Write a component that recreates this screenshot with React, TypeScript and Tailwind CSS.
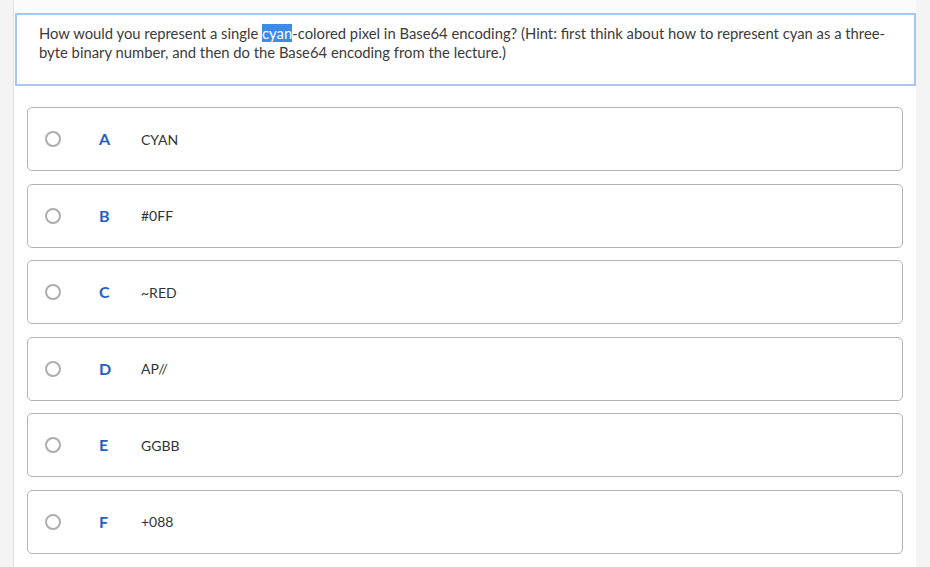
const options = [
  { letter: 'A', text: 'CYAN' },
  { letter: 'B', text: '#0FF' },
  { letter: 'C', text: '~RED' },
  { letter: 'D', text: 'AP//' },
  { letter: 'E', text: 'GGBB' },
  { letter: 'F', text: '+088' },
];

export default function App() {
  return (
    <div
      className="h-[567px] w-[930px] overflow-hidden bg-[#f4f4f4]"
      style={{ fontFamily: "'Source Sans Pro', Lato, 'Liberation Sans', sans-serif" }}
    >
      <div className="ml-[13px] h-full w-[903px] border-l border-[#e2e2e2] bg-white">
        <div className="h-[13px] bg-[#fbfbfb]" />
        <div className="ml-px h-[73px] border-2 border-[#a9c6ee] px-[22px] pt-[9px] text-[14.8px] leading-[19px] text-[#3b3b3b]">
          How would you represent a single <span className="bg-[#3a8ce8] text-white">cyan</span>-colored pixel
          in Base64 encoding? (Hint: first think about how to represent cyan as a three-
          <br />
          byte binary number, and then do the Base64 encoding from the lecture.)
        </div>

        <div className="mt-[21px] flex flex-col gap-[12.6px] pl-[13px] pr-[13px]">
          {options.map((o) => (
            <div
              key={o.letter}
              className="flex h-[64px] items-center rounded-[5px] border border-[#b3b3b3] bg-white"
            >
              <div className="h-[16px] w-[16px] ml-[17px] rounded-full border-2 border-[#adadad]" />
              <div className="ml-[38px] w-[42px] text-[16px] font-bold text-[#1f5fc5]">{o.letter}</div>
              <div className="text-[14px] text-[#333]">{o.text}</div>
            </div>
          ))}
        </div>
      </div>
    </div>
  );
}
